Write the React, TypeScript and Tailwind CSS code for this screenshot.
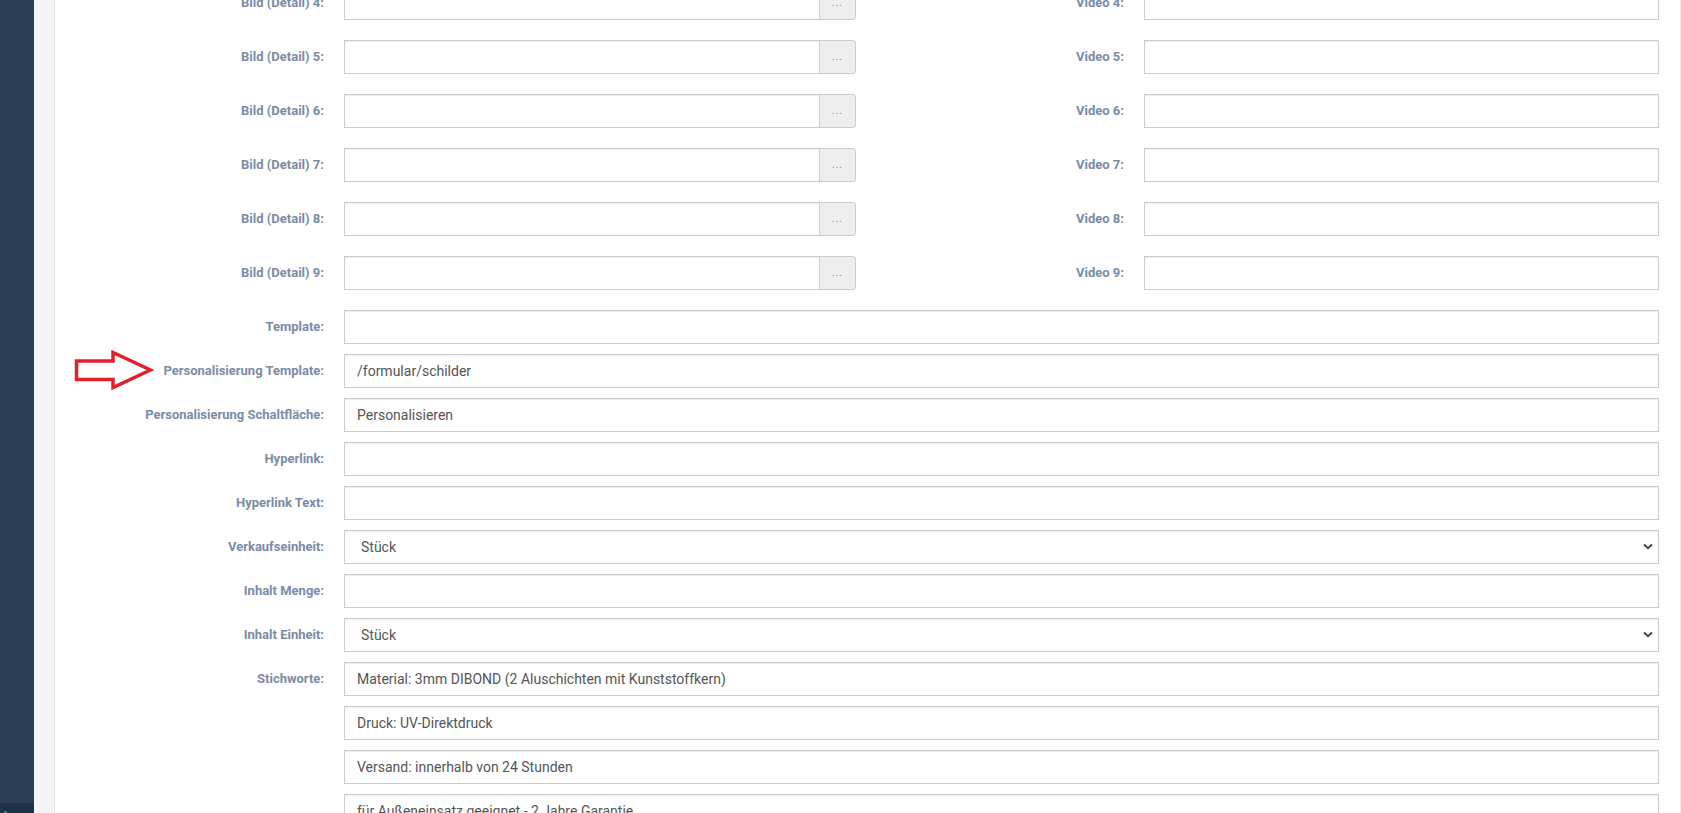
import React from 'react';

const labelCls = 'shrink-0 text-right text-[13px] font-bold text-[#7b8ca6] leading-[34px]';
const inputCls =
  'h-[34px] w-full min-w-0 border border-[#cccccc] bg-white px-3 text-[14px] text-[#555555] shadow-[inset_0_1px_1px_rgba(0,0,0,0.075)] outline-none';

function TextInput({ value = '' }: { value?: string }) {
  return <input readOnly value={value} className={inputCls} />;
}

function PickerInput() {
  return (
    <div className="flex h-[34px] w-full">
      <input readOnly value="" className={inputCls} />
      <button
        type="button"
        className="h-[34px] w-[36px] shrink-0 rounded-r-[4px] border border-l-0 border-[#cccccc] bg-[#eeeeee] text-[10px] leading-none tracking-[1px] text-[#7b8ca6]"
      >
        ...
      </button>
    </div>
  );
}

function SelectInput({ value }: { value: string }) {
  return (
    <div className="relative w-full">
      <select
        value={value}
        onChange={() => {}}
        className={`${inputCls} appearance-none pl-[16px]`}
      >
        <option>{value}</option>
      </select>
      <svg
        className="pointer-events-none absolute right-[6px] top-[13px]"
        width="10"
        height="7"
        viewBox="0 0 10 7"
      >
        <path d="M1 1.5 L5 5.2 L9 1.5" fill="none" stroke="#444" strokeWidth="2" />
      </svg>
    </div>
  );
}

function Row({ label, children }: { label: string; children: React.ReactNode }) {
  return (
    <div className="flex items-start">
      <div className={`${labelCls} w-[269px]`}>{label}</div>
      <div className="ml-5 flex-1">{children}</div>
    </div>
  );
}

const detailRows = [4, 5, 6, 7, 8, 9];

const keywords = [
  'Material: 3mm DIBOND (2 Aluschichten mit Kunststoffkern)',
  'Druck: UV-Direktdruck',
  'Versand: innerhalb von 24 Stunden',
  'für Außeneinsatz geeignet - 2 Jahre Garantie',
];

export default function App() {
  return (
    <div className="flex h-[813px] w-full overflow-hidden bg-white font-['Roboto',sans-serif]">
      {/* side navigation */}
      <aside className="flex w-[34px] shrink-0 flex-col justify-end bg-[#2b3e53]">
        <div className="relative h-[10px] bg-[#1d3249]">
          <span className="absolute left-[4px] top-[8px] h-[3px] w-[3px] bg-[#4e7c8c]" />
        </div>
      </aside>
      <div className="w-[21px] shrink-0 border-r border-[#e6e6ee] bg-[#f5f5f7]" />

      <main className="flex-1 border-r border-[#ececf2] pr-[21px]">
        <div className="-mt-[14px] flex flex-col gap-5">
          {detailRows.map((n) => (
            <div key={n} className="grid grid-cols-[801px_1fr]">
              <div className="flex items-start">
                <div className={`${labelCls} w-[269px]`}>Bild (Detail) {n}:</div>
                <div className="ml-5 flex-1">
                  <PickerInput />
                </div>
              </div>
              <div className="flex items-start">
                <div className={`${labelCls} w-[268px]`}>Video {n}:</div>
                <div className="ml-5 flex-1">
                  <TextInput />
                </div>
              </div>
            </div>
          ))}
        </div>

        <div className="mt-5 flex flex-col gap-[10px]">
          <Row label="Template:">
            <TextInput />
          </Row>
          <div className="relative">
            {/* red hint arrow */}
            <svg
              className="absolute left-[19px] top-[-4px]"
              width="80"
              height="40"
              viewBox="0 0 80 40"
            >
              <polygon
                points="2.5,11 39,11 39,2.5 76.5,20 39,37.5 39,29.5 2.5,29.5"
                fill="none"
                stroke="#e3202a"
                strokeWidth="3.5"
                strokeLinejoin="miter"
              />
            </svg>
            <Row label="Personalisierung Template:">
              <TextInput value="/formular/schilder" />
            </Row>
          </div>
          <Row label="Personalisierung Schaltfläche:">
            <TextInput value="Personalisieren" />
          </Row>
          <Row label="Hyperlink:">
            <TextInput />
          </Row>
          <Row label="Hyperlink Text:">
            <TextInput />
          </Row>
          <Row label="Verkaufseinheit:">
            <SelectInput value="Stück" />
          </Row>
          <Row label="Inhalt Menge:">
            <TextInput />
          </Row>
          <Row label="Inhalt Einheit:">
            <SelectInput value="Stück" />
          </Row>
          <Row label="Stichworte:">
            <div className="flex flex-col gap-[10px]">
              {keywords.map((k) => (
                <TextInput key={k} value={k} />
              ))}
            </div>
          </Row>
        </div>
      </main>
    </div>
  );
}
